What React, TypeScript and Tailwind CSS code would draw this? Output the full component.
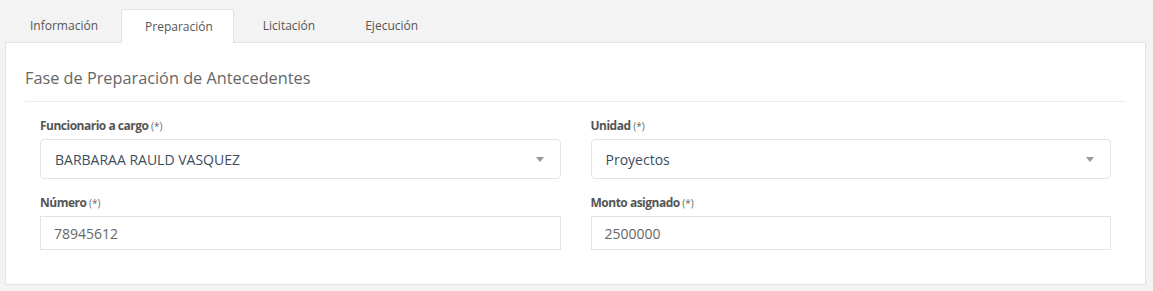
import React from 'react';

const tabs = [
  { label: 'Información', gap: 'mr-0' },
  { label: 'Preparación', gap: 'mr-[5px]' },
  { label: 'Licitación', gap: 'mr-[3px]' },
  { label: 'Ejecución', gap: 'mr-0' },
];

function Label({ text }: { text: string }) {
  return (
    <label className="block h-[18px] text-[12px] leading-[18px] font-bold tracking-[-0.5px] text-[#555]">
      {text} <span className="text-[10px] font-normal tracking-normal text-[#666]">(*)</span>
    </label>
  );
}

function SelectBox({ value }: { value: string }) {
  return (
    <div className="mt-[4px] flex h-[40px] items-center justify-between rounded-[4px] border border-[#e3e3e3] bg-white pl-[14px] pr-[16px]">
      <span className="text-[14px] text-[#3e4d5e]">{value}</span>
      <span className="h-0 w-0 border-x-[4px] border-t-[5px] border-x-transparent border-t-[#999]" />
    </div>
  );
}

function TextBox({ value }: { value: string }) {
  return (
    <div className="mt-[4px] flex h-[34px] items-center border border-[#e3e3e3] bg-white px-[13px]">
      <span className="text-[14px] text-[#666]">{value}</span>
    </div>
  );
}

export default function App() {
  return (
    <div
      className="h-[291px] w-[1153px] bg-[#f3f3f3] pl-[5px] pr-[7px] pt-[9px]"
      style={{ fontFamily: '"Open Sans", "Liberation Sans", sans-serif' }}
    >
      <div className="ml-[1px] flex h-[33px] items-stretch">
        {tabs.map((t) => {
          const active = t.label === 'Preparación';
          return (
            <div
              key={t.label}
              className={
                active
                  ? `relative z-10 -mb-px flex items-center rounded-t-[3px] border border-b-0 border-[#e3e3e3] bg-white pl-[23px] pr-[20px] text-[12px] text-[#555] ${t.gap}`
                  : `flex items-center border border-transparent pl-[23px] pr-[22px] text-[12px] text-[#555] ${t.gap}`
              }
            >
              {t.label}
            </div>
          );
        })}
      </div>
      <div className="h-[243px] border border-[#e3e3e3] bg-white px-[19px]">
        <div className="flex h-[59px] items-center border-b border-[#ececec] pt-[12px]">
          <h2 className="text-[16.3px] font-medium text-[#666]">Fase de Preparación de Antecedentes</h2>
        </div>
        <div className="grid grid-cols-2 gap-x-[30px] px-[15px] pt-[15px]">
          <div>
            <Label text="Funcionario a cargo" />
            <SelectBox value="BARBARAA RAULD VASQUEZ" />
          </div>
          <div>
            <Label text="Unidad" />
            <SelectBox value="Proyectos" />
          </div>
          <div className="mt-[15px]">
            <Label text="Número" />
            <TextBox value="78945612" />
          </div>
          <div className="mt-[15px]">
            <Label text="Monto asignado" />
            <TextBox value="2500000" />
          </div>
        </div>
      </div>
    </div>
  );
}
